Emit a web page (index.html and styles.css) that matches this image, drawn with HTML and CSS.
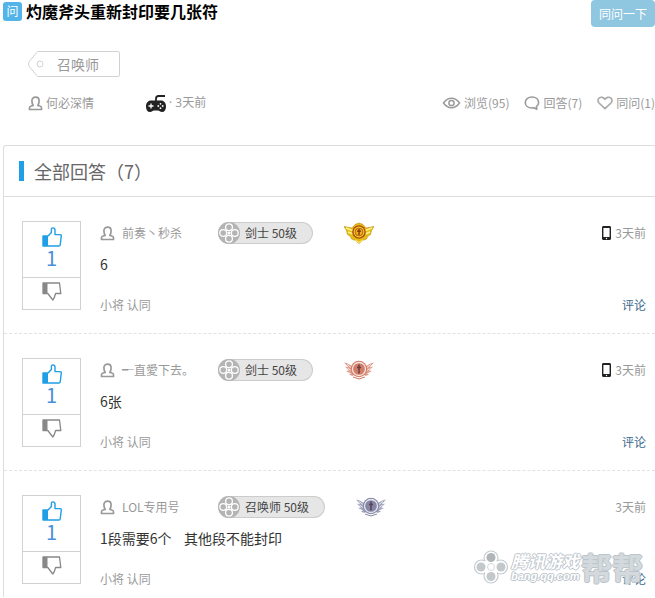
FILE: index.html
```html
<!DOCTYPE html>
<html lang="zh-CN">
<head>
    <meta charset="UTF-8">
    <meta name="viewport" content="width=device-width, initial-scale=1.0">
    <title>灼魔斧头重新封印要几张符</title>
    <link rel="stylesheet" href="styles.css">
</head>
<body>
    <!-- iconos compartidos -->
    <svg class="sprite" aria-hidden="true">
        <symbol id="i-user" viewBox="0 0 15 15">
            <path d="M1.500 13.500v-1.700c0-1 .5-1.600 1.500-1.800l2.200-.6C4.300 8 3.900 6.200 3.900 4.700 3.900 2.600 5.500 1.200 7.500 1.200s3.600 1.400 3.600 3.500c0 1.500-.4 3.300-1.300 4.700l2.200.6c1 .2 1.500.8 1.500 1.800v1.700z" fill="none" stroke="currentColor" stroke-width="1.700" stroke-linejoin="round"/>
        </symbol>
        <symbol id="i-up" viewBox="0 0 20 20">
            <path d="M1 9h5v10H1z" fill="currentColor"/>
            <path d="M1 9h5l3.400-3.600V2.200C9.400 1.400 10 .900 10.800.900c1.400 0 2.200 1 2.200 2.400V7.600h5.200c.8 0 1.200.5 1.100 1.300L18.200 18c-.1.700-.5 1-1.200 1H1z" fill="none" stroke="currentColor" stroke-width="1.400" stroke-linejoin="round"/>
        </symbol>
        <symbol id="i-down" viewBox="0 0 20 20">
            <path d="M1 1h4.500v10.500H1z" fill="currentColor"/>
            <path d="M1 1h16.500l1.300 10.500h-5.200c-.7 2.900-1.500 5-2.800 6.500L5.800 11.500H1z" fill="none" stroke="currentColor" stroke-width="1.300" stroke-linejoin="round"/>
        </symbol>
        <symbol id="i-job" viewBox="0 0 22 22">
            <circle cx="11" cy="11" r="11" fill="#b4b4b4"/>
            <g fill="#b4b4b4" stroke="#fff" stroke-width="1.300">
                <circle cx="11" cy="5.200" r="3.400"/>
                <circle cx="11" cy="16.800" r="3.400"/>
                <circle cx="5.200" cy="11" r="3.400"/>
                <circle cx="16.800" cy="11" r="3.400"/>
            </g>
            <circle cx="11" cy="11" r="1.500" fill="#fff"/>
        </symbol>
        <symbol id="i-phone" viewBox="0 0 9 14">
            <path d="M1.500 0h6C8.400 0 9 .6 9 1.500v11c0 .9-.6 1.500-1.500 1.500h-6C.6 14 0 13.400 0 12.500v-11C0 .6.6 0 1.500 0zM1.400 2v9h6.200V2z" fill="#222" fill-rule="evenodd"/>
            <circle cx="4.500" cy="12.500" r=".7" fill="#fff"/>
        </symbol>
        <symbol id="i-medal" viewBox="0 0 30 20">
            <path d="M0 2.500c3 .8 5 1.500 8 3.500l2 8-1 2-4-1.200 2-1.300-5-2.500 3-.5-4-3.700 3.200.2zM30 2.500c-3 .8-5 1.500-8 3.500l-2 8 1 2 4-1.200-2-1.300 5-2.500-3-.5 4-3.700-3.200.2z" fill="currentColor" opacity=".75"/>
            <path d="M3 4.500l5.500 4M3.500 8l5 3.500M27 4.500l-5.500 4M26.500 8l-5 3.500" stroke="#fff" stroke-width="1" opacity=".7"/>
            <circle cx="15" cy="9" r="8.200" fill="currentColor"/>
            <circle cx="15" cy="9" r="6.500" fill="none" stroke="#fff" stroke-width="1.300" opacity=".8"/>
            <path d="M15 4.500v9M13 7.500h4" stroke="#503040" stroke-width="1.500" opacity=".8"/>
            <path d="M9 17l6 2 6-2" fill="none" stroke="currentColor"/>
        </symbol>
        <symbol id="i-medal-gold" viewBox="0 0 30 22">
            <path d="M0 4.500l8 1.500 3-3.500 4-1.500 4 1.500L22 6l8-1.500-2.500 4-1 4-3 2-1 2.500-4 1.500-3.500 3-3.500-3-4-1.500-1-2.500-3-2-1-4z" fill="#e6bd14" stroke="#bd8710" stroke-width=".6"/>
            <path d="M2 6l6.500 2.500M4 10l5 2M28 6l-6.500 2.500M26 10l-5 2" stroke="#fff387" stroke-width="1.500"/>
            <circle cx="15" cy="10" r="6.800" fill="#a94d0b"/>
            <circle cx="15" cy="10" r="5.400" fill="#f6cf31"/>
            <circle cx="15" cy="10" r="3.900" fill="#f0b020" stroke="#a94d0b" stroke-width=".8"/>
            <path d="M15 7v6M13 9.200h4" stroke="#7b2e08" stroke-width="1.300"/>
            <path d="M11 18l4 2.500 4-2.500" fill="none" stroke="#fff387"/>
        </symbol>
    </svg>

    <header class="question">
        <div class="title-row">
            <span class="ask-mark">问</span>
            <h1>灼魔斧头重新封印要几张符</h1>
            <button class="same-btn" type="button">同问一下</button>
        </div>
        <a class="tag" href="#">
            <svg class="tag-shape" viewBox="0 0 92 26" aria-hidden="true">
                <path d="M9.500.5H90q1.500 0 1.500 1.500v22q0 1.500-1.500 1.500H9.500L1 15q-1-2 0-4z" fill="#fff" stroke="#d2d2d2"/>
                <circle cx="12" cy="13" r="3" fill="#fff" stroke="#d2d2d2"/>
            </svg>
            <span class="tag-text">召唤师</span>
        </a>
        <div class="meta">
            <span class="asker"><svg class="icon-user"><use href="#i-user"/></svg>何必深情</span>
            <svg class="icon-pad" viewBox="0 0 22 19" aria-hidden="true">
                <path d="M11 7V4.500Q11 2 13.500 2H20" fill="none" stroke="#222" stroke-width="1.800"/>
                <path d="M6 6.500h10c3 0 5 2.500 5 6s-1.500 5.500-4 5.500c-2 0-2.500-1.500-4-1.500H9c-1.500 0-2 1.500-4 1.500-2.500 0-4-2-4-5.500s2-6 5-6z" fill="#222"/>
                <path d="M6 9.500v5M3.500 12h5" stroke="#fff" stroke-width="1.300"/>
                <g fill="#fff"><circle cx="15.500" cy="9.800" r=".9"/><circle cx="15.500" cy="14.200" r=".9"/><circle cx="13.300" cy="12" r=".9"/><circle cx="17.700" cy="12" r=".9"/></g>
            </svg>
            <span class="asked">· 3天前</span>
            <ul class="stats">
                <li>
                    <svg class="icon-eye" viewBox="0 0 18 12" aria-hidden="true"><path d="M1 6Q4.500 1.200 9 1.200T17 6Q13.500 10.800 9 10.800T1 6z" fill="none" stroke="#9a9a9a" stroke-width="1.500"/><circle cx="9" cy="6" r="2.600" fill="none" stroke="#9a9a9a" stroke-width="1.500"/></svg>浏览(95)
                </li>
                <li>
                    <svg class="icon-stat" viewBox="0 0 16 14" aria-hidden="true"><path d="M8 1C4 1 1.300 3.300 1.300 6.500S4 12 8 12c.8 0 1.200 0 1.800-.2l3 1.400-.4-2.600c1.400-1 2.200-2.500 2.200-4.100C14.600 3.300 12 1 8 1z" fill="none" stroke="#9a9a9a" stroke-width="1.600" stroke-linejoin="round"/></svg>回答(7)
                </li>
                <li>
                    <svg class="icon-stat" viewBox="0 0 16 14" aria-hidden="true"><path d="M8 12.700L2 7C.5 5.300.8 3 2.300 1.900 4 .700 6.500 1.100 8 3.400 9.500 1.100 12 .700 13.700 1.900 15.200 3 15.500 5.300 14 7z" fill="none" stroke="#aaa" stroke-width="1.700" stroke-linejoin="round"/></svg>同问(1)
                </li>
            </ul>
        </div>
    </header>

    <section class="answers">
        <h2>全部回答（7）</h2>

        <article class="answer">
            <div class="votes">
                <button class="up" type="button" aria-label="赞"><svg><use href="#i-up"/></svg><span>1</span></button>
                <button class="down" type="button" aria-label="踩"><svg><use href="#i-down"/></svg></button>
            </div>
            <div class="content">
                <div class="info">
                    <span class="name"><svg class="icon-user"><use href="#i-user"/></svg>前奏丶秒杀</span>
                    <span class="badge"><svg><use href="#i-job"/></svg>剑士 50级</span>
                    <svg class="medal gold"><use href="#i-medal-gold"/></svg>
                    <span class="time"><svg class="icon-phone"><use href="#i-phone"/></svg>3天前</span>
                </div>
                <p>6</p>
                <div class="foot"><span>小将 认同</span><a href="#">评论</a></div>
            </div>
        </article>

        <article class="answer">
            <div class="votes">
                <button class="up" type="button" aria-label="赞"><svg><use href="#i-up"/></svg><span>1</span></button>
                <button class="down" type="button" aria-label="踩"><svg><use href="#i-down"/></svg></button>
            </div>
            <div class="content">
                <div class="info">
                    <span class="name"><svg class="icon-user"><use href="#i-user"/></svg>╾直愛下去。</span>
                    <span class="badge"><svg><use href="#i-job"/></svg>剑士 50级</span>
                    <svg class="medal bronze"><use href="#i-medal"/></svg>
                    <span class="time"><svg class="icon-phone"><use href="#i-phone"/></svg>3天前</span>
                </div>
                <p>6张</p>
                <div class="foot"><span>小将 认同</span><a href="#">评论</a></div>
            </div>
        </article>

        <article class="answer">
            <div class="votes">
                <button class="up" type="button" aria-label="赞"><svg><use href="#i-up"/></svg><span>1</span></button>
                <button class="down" type="button" aria-label="踩"><svg><use href="#i-down"/></svg></button>
            </div>
            <div class="content">
                <div class="info">
                    <span class="name"><svg class="icon-user"><use href="#i-user"/></svg>LOL专用号</span>
                    <span class="badge"><svg><use href="#i-job"/></svg>召唤师 50级</span>
                    <svg class="medal silver"><use href="#i-medal"/></svg>
                    <span class="time">3天前</span>
                </div>
                <p>1段需要6个&nbsp;&nbsp;&nbsp;&nbsp;其他段不能封印</p>
                <div class="foot"><span>小将 认同</span><a href="#">评论</a></div>
            </div>
        </article>

        <div class="watermark">
            <svg class="wm-logo" viewBox="0 0 36 36" aria-hidden="true">
                <g fill="#fff" stroke="#c3cbd0" stroke-width="1.200">
                    <circle cx="18" cy="9" r="7"/><circle cx="8.500" cy="18" r="7"/><circle cx="27.500" cy="18" r="7"/><circle cx="18" cy="27" r="7"/>
                </g>
                <path d="M12 12h12v12H12z" fill="#fff"/>
                <g fill="#c3c8cb">
                    <circle cx="18" cy="8.500" r="4.500" fill="#b0b5b8"/><circle cx="8" cy="18" r="4.500"/><circle cx="28" cy="18" r="4.500"/><circle cx="18" cy="27.500" r="4.500"/>
                </g>
                <circle cx="18" cy="18" r="3.500" fill="#fff" stroke="#d5dadd"/>
            </svg>
            <div class="wm-text"><b>腾讯游戏</b><i>bang.qq.com</i></div>
            <strong>帮帮</strong>
        </div>
    </section>
</body>
</html>
```

FILE: styles.css
```css
* {
    box-sizing: border-box;
}
body {
    margin: 0;
    padding-left: 3px;
    font-family: "Noto Sans CJK SC", sans-serif;
    font-size: 12px;
    line-height: 20px;
    color: #999;
    background: #fff;
    overflow-x: hidden;
}
svg {
    flex: none;
}
button {
    font-family: inherit;
    cursor: pointer;
}
a {
    text-decoration: none;
}
.sprite {
    position: absolute;
    width: 0;
    height: 0;
}

/* pregunta */
.question {
    height: 145px;
}
.title-row {
    display: flex;
    align-items: flex-start;
}
.ask-mark {
    width: 19px;
    height: 19px;
    margin-top: 2px;
    border-radius: 3px;
    background: #52b4e8;
    color: #fff;
    line-height: 18px;
    text-align: center;
}
h1 {
    margin: 0 0 0 4px;
    font-size: 16px;
    line-height: 22px;
    color: #000;
}
.same-btn {
    margin-left: auto;
    width: 64px;
    height: 27px;
    padding: 0;
    border: 0;
    border-radius: 4px;
    background: #8fc6e0;
    color: #fff;
    font-size: 12px;
}
.tag {
    display: grid;
    width: 92px;
    height: 26px;
    margin: 24px 0 0 25px;
    color: #999;
    font-size: 14px;
    line-height: 26px;
}
.tag-shape,
.tag-text {
    grid-area: 1 / 1;
}
.tag-shape {
    width: 92px;
    height: 26px;
}
.tag-text {
    padding-left: 29px;
}
.meta {
    display: flex;
    align-items: center;
    height: 22px;
    margin: 15px 0 0 25px;
}
.asker,
.name {
    display: flex;
    align-items: center;
    width: 118px;
}
.asker {
    width: 117px;
}
.icon-user {
    width: 15px;
    height: 15px;
    margin-right: 3px;
}
.icon-pad {
    width: 22px;
    height: 19px;
    margin-right: 2px;
}
.asked {
    font-family: "Open Sans", "Noto Sans CJK SC", sans-serif;
}
.stats {
    display: flex;
    gap: 15px;
    margin: 0 0 0 auto;
    padding: 0;
    list-style: none;
}
.stats li {
    display: flex;
    align-items: center;
    gap: 3px;
}
.icon-eye {
    width: 19px;
    height: 12px;
}
.icon-stat {
    width: 16px;
    height: 14px;
}

/* respuestas */
.answers {
    position: relative;
    border: solid #ddd;
    border-width: 1px 0 0 1px;
    border-radius: 3px 0 0 0;
}
h2 {
    display: flex;
    align-items: center;
    height: 51px;
    margin: 0;
    padding-left: 15px;
    border-bottom: 1px solid #ddd;
    font-size: 18px;
    font-weight: normal;
    color: #666;
}
h2::before {
    content: "";
    width: 5px;
    height: 20px;
    margin-right: 10px;
    background: #1f9fe5;
}
.answer {
    display: flex;
    gap: 19px;
    padding: 24px 9px 18px 18px;
    border-bottom: 1px dashed #e2e2e2;
}
.answer:last-of-type {
    padding-bottom: 8px;
    border-bottom: 0;
}
.votes {
    width: 59px;
    height: 89px;
    flex: none;
    border: 1px solid #d2d2d2;
}
.votes button {
    display: flex;
    flex-direction: column;
    align-items: center;
    width: 100%;
    padding: 0;
    border: 0;
    background: none;
}
.votes svg {
    width: 20px;
    height: 20px;
}
.votes .up {
    height: 56px;
    padding-top: 5px;
    border-bottom: 1px solid #d2d2d2;
    color: #1f9fe5;
    font-size: 20px;
    line-height: 22px;
}
.votes .up span {
    color: #4a90d9;
}
.votes .down {
    height: 31px;
    padding-top: 4px;
    color: #888;
}
.content {
    flex: 1;
}
.info {
    display: flex;
    align-items: center;
    height: 24px;
}
.name .icon-user {
    margin-right: 7px;
}
.badge {
    display: flex;
    align-items: center;
    gap: 5px;
    height: 22px;
    padding-right: 15px;
    border: 1px solid #ccc;
    border-left: 0;
    border-radius: 11px;
    background: #e6e6e6;
    color: #444;
}
.badge svg {
    width: 22px;
    height: 22px;
}
.medal {
    width: 30px;
    height: 20px;
    margin-left: 31px;
}
.gold {
    height: 22px;
}
.bronze {
    color: #d27b66;
}
.silver {
    color: #8486a5;
}
.time {
    display: flex;
    align-items: center;
    gap: 4px;
    margin-left: auto;
}
.icon-phone {
    width: 9px;
    height: 14px;
}
.content p {
    margin: 8px 0 20px;
    font-size: 14px;
    line-height: 22px;
    color: #333;
}
.foot {
    display: flex;
    justify-content: space-between;
}
.foot a {
    color: #3d6a8c;
}

/* marca de agua */
.watermark {
    position: absolute;
    right: 12px;
    bottom: 12px;
    display: flex;
    align-items: center;
    color: #fff;
    text-shadow: 1px 0 #bcc5cb, -1px 0 #bcc5cb, 0 1px #bcc5cb, 0 -1px #bcc5cb;
    pointer-events: none;
}
.wm-logo {
    width: 36px;
    height: 36px;
    margin-right: 2px;
}
.wm-text {
    display: flex;
    flex-direction: column;
    width: 70px;
}
.wm-text b {
    font-size: 17px;
    font-style: italic;
    line-height: 18px;
}
.wm-text i {
    font-family: "Liberation Sans", sans-serif;
    font-size: 11px;
    font-weight: bold;
    line-height: 12px;
}
.watermark strong {
    font-size: 31px;
    line-height: 34px;
    color: #d3d9dc;
}
```
